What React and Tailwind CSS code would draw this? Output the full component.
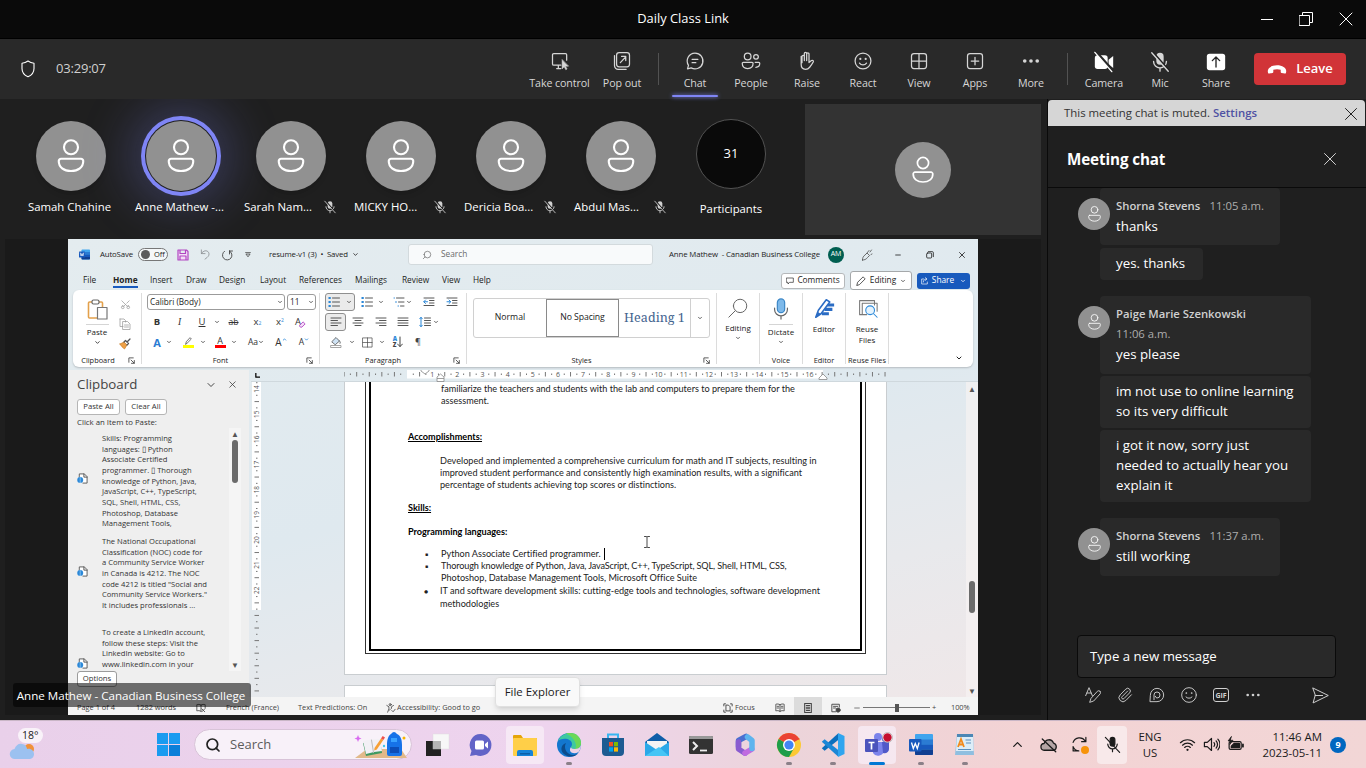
import React from "react";
import { ChevronDown, ChevronUp, X, Search, Paperclip, Minus, Scissors } from "lucide-react";

function Svg({ className = "size-5", box = "0 0 24 24", sw = 1.5, children }) {
  return (
    <svg className={"shrink-0 " + className} viewBox={box} fill="none" stroke="currentColor" strokeWidth={sw} strokeLinecap="round" strokeLinejoin="round">
      {children}
    </svg>
  );
}

const Person = ({ className, sw = 1.7 }) => (
  <Svg className={className} box="0 0 24 30" sw={sw}>
    <circle cx="12" cy="8" r="5.6" />
    <path d="M4 17.2h16a1.8 1.8 0 0 1 1.8 1.8c0 5-4 8-9.8 8s-9.8-3-9.8-8A1.8 1.8 0 0 1 4 17.2Z" />
  </Svg>
);

const MicOff = ({ className }) => (
  <Svg className={className} sw={1.5}>
    <rect x="8" y="2" width="8" height="13" rx="4" fill="currentColor" stroke="none" />
    <path d="M5 11.5a7 7 0 0 0 14 0M12 18.5V22" />
    <path d="M4.5 1.5 22 21.5" className="stroke-[#202020]" strokeWidth="2" />
    <path d="M3 2l18 20" />
  </Svg>
);

/* ---------- Title bar and meeting toolbar ---------- */

function TitleBar() {
  return (
    <header className="grid h-[39px] shrink-0 grid-cols-[1fr_auto_1fr] items-center border-b border-black bg-[#0a0a0a] text-white">
      <span />
      <h1 className="text-[12.9px]">Daily Class Link</h1>
      <div className="flex items-center justify-end gap-[26px] pr-[13px]">
        <span className="h-px w-3 bg-white" />
        <Svg className="size-[14px]" box="0 0 14 14" sw={1}>
          <path d="M.5 3.5h10v10H.5zM3.500 3.500v-3h10v10h-3" strokeLinejoin="miter" />
        </Svg>
        <Svg className="size-[14px]" box="0 0 14 14" sw={1}><path d="M1 1l12 12M13 1L1 13" /></Svg>
      </div>
    </header>
  );
}

const icons = {
  control: <Svg><path d="M13 17H4.500A1.500 1.500 0 0 1 3 15.500v-11A1.500 1.500 0 0 1 4.500 3h14A1.500 1.500 0 0 1 20 4.500V11M8 21h5M10 17v4" /><path d="M14.500 10.500v11l2.500-2.500 2 3.500 1.500-1-2-3.300H22z" fill="currentColor" strokeWidth=".6" /></Svg>,
  popout: <Svg><rect x="5.5" y="2" width="15.5" height="17" rx="3" /><path d="M3 5.500v12a4.500 4.500 0 0 0 4.500 4.500h9.500M10 14l6.500-7M11.500 6.500h5v5" /></Svg>,
  chat: <Svg><path d="M12 2.500a9.500 9.500 0 1 1-4.600 17.800L3 21.500l1.200-4.300A9.500 9.500 0 0 1 12 2.500ZM8.500 10h7M8.500 14H13" /></Svg>,
  people: <Svg><circle cx="8" cy="6.5" r="4" /><circle cx="18" cy="7" r="2.8" /><path d="M2.800 13.500h10.400a1.300 1.300 0 0 1 1.300 1.300c0 4-2.500 6.200-6.500 6.200s-6.500-2.200-6.500-6.200a1.300 1.300 0 0 1 1.300-1.300ZM17 13.500h4.200a1.300 1.300 0 0 1 1.300 1.300c0 3-1.800 4.700-4.700 4.700" /></Svg>,
  raise: <Svg><path d="M7 14V6.500a1.400 1.400 0 0 1 2.800 0V11.500 3a1.400 1.400 0 0 1 2.800 0V11.500 3.500a1.400 1.400 0 0 1 2.800 0v10.300l3-2.300c1.200-.8 2.700.3 2.200 1.500-.9 2-2.600 4.200-4.400 6.500-1.300 1.700-3 2.500-5 2.500-3.500 0-5.200-2.500-5.200-6V6.500" transform="translate(-1)" /></Svg>,
  react: <Svg><circle cx="12" cy="12" r="9.5" /><path d="M7.800 14.500c2 3 6.400 3 8.400 0" /><circle cx="8.800" cy="9.5" r="1.300" fill="currentColor" stroke="none" /><circle cx="15.200" cy="9.5" r="1.300" fill="currentColor" stroke="none" /></Svg>,
  view: <Svg><rect x="3" y="3" width="18" height="18" rx="3" /><path d="M12 3v18M3 12h18" /></Svg>,
  apps: <Svg><rect x="3" y="3" width="18" height="18" rx="3" /><path d="M12 7.500v9M7.500 12h9" /></Svg>,
  more: <Svg><circle cx="4.500" cy="12" r="2.200" fill="currentColor" stroke="none" /><circle cx="12" cy="12" r="2.200" fill="currentColor" stroke="none" /><circle cx="19.500" cy="12" r="2.200" fill="currentColor" stroke="none" /></Svg>,
  camera: <Svg className="size-[22px] text-white"><rect x="2" y="4.500" width="14" height="15" rx="3" fill="currentColor" stroke="none" /><path d="M17 9.500l5-4v13l-5-4z" fill="currentColor" stroke="none" /><path d="M4 1.500l17.500 20" className="stroke-[#292929]" strokeWidth="3" /><path d="M2 1.500l18.500 21" /></Svg>,
  mic: <MicOff className="size-[22px]" />,
  share: <Svg className="size-[22px] text-white"><rect x="2" y="3" width="20" height="18" rx="3" fill="currentColor" stroke="none" /><path d="M12 17.500V7M8 10.500l4-4 4 4" className="stroke-[#292929]" /></Svg>,
};

function Tool({ icon, label, width = "w-14", active }) {
  return (
    <button className={"flex h-full flex-col items-center pt-3 text-[#d6d6d6] " + width}>
      <span className="grid h-5 place-items-center">{icons[icon]}</span>
      <span className="mt-1 h-4 whitespace-nowrap text-[10.700px] leading-4 tracking-[-0.1px]">{label}</span>
      {active && <span className="mt-[4px] h-[2px] w-[46px] rounded bg-[#7f85f5] shadow-[0_0_4px_#7f85f5]" />}
    </button>
  );
}

function Toolbar() {
  return (
    <div className="relative z-10 flex h-[60px] shrink-0 items-center bg-[#292929] pl-[21px] pr-5">
      <Svg className="h-[18px] w-[14px] text-white" box="0 0 14 18" sw={1.1}>
        <path d="M7 1c1.800 1.300 3.700 2 6 2.200V8.500c0 4-2.300 6.700-6 8.300C3.300 15.200 1 12.500 1 8.500V3.200C3.300 3 5.200 2.300 7 1Z" />
      </Svg>
      <span className="ml-[21px] text-[13px] tracking-[-0.2px] text-[#d0d0d0]">03:29:07</span>
      <nav className="ml-auto flex h-full items-center">
        <Tool icon="control" label="Take control" width="w-[69px]" />
        <Tool icon="popout" label="Pop out" />
        <span className="mx-2 h-8 w-px bg-[#525252]" />
        <Tool icon="chat" label="Chat" active />
        <Tool icon="people" label="People" />
        <Tool icon="raise" label="Raise" />
        <Tool icon="react" label="React" />
        <Tool icon="view" label="View" />
        <Tool icon="apps" label="Apps" />
        <Tool icon="more" label="More" />
        <span className="mx-2 h-8 w-px bg-[#525252]" />
        <Tool icon="camera" label="Camera" />
        <Tool icon="mic" label="Mic" />
        <Tool icon="share" label="Share" />
        <button className="ml-[10px] flex h-8 w-[92px] items-center justify-center gap-[9px] rounded-[4px] bg-[#d13438] text-[13px] font-semibold text-white">
          <Svg className="h-[9px] w-5" box="0 0 20 9" sw={0}>
            <path fill="currentColor" d="M10 .3c5.500 0 9.500 2.600 9.200 6.200l-.2 1.200c-.1.700-.7 1-1.300.9l-3-.6c-.6-.1-1-.5-1-1.100V4.800c-2.300-.8-5-.8-7.400 0v2.100c0 .6-.4 1-1 1.100l-3 .6c-.6.100-1.200-.2-1.300-.9L.8 6.500C.5 2.900 4.500.3 10 .3Z" />
          </Svg>
          Leave
        </button>
      </nav>
    </div>
  );
}

/* ---------- Participant strip ---------- */

const people = [
  { name: "Samah Chahine" },
  { name: "Anne Mathew -...", speaking: true },
  { name: "Sarah Nam...", muted: true },
  { name: "MICKY HO...", muted: true },
  { name: "Dericia Boa...", muted: true },
  { name: "Abdul Mas...", muted: true },
];

function Gallery() {
  return (
    <div className="flex h-[140px] shrink-0 pl-[16px] text-white">
      {people.map((p) => (
        <div key={p.name} className="flex w-[110px] flex-col items-center pt-[22px]">
          <div className={"grid size-[70px] place-items-center rounded-full bg-[#919191] " + (p.speaking ? "shadow-[0_0_0_1px_#1f1f1f,0_0_0_5px_#7f85f5,0_0_50px_16px_rgba(127,133,245,0.28)]" : "shadow-md")}>
            <Person className="h-[38px] w-[30px]" />
          </div>
          <div className={"mt-[7px] flex h-[18px] items-center self-stretch whitespace-nowrap text-[11.400px] " + (p.muted ? "justify-between pl-[8px] pr-[9px]" : "-ml-[3px] justify-center")}>
            <span>{p.name}</span>
            {p.muted && <MicOff className="size-[14px] text-[#d0d0d0]" />}
          </div>
        </div>
      ))}
      <div className="flex w-[110px] flex-col items-center pt-[20px]">
        <div className="grid size-[70px] place-items-center rounded-full border border-[#525252] bg-[#0a0a0a] text-[13px]">31</div>
        <span className="mt-[11px] text-[11.300px] leading-[18px]">Participants</span>
      </div>
      <div className="ml-[19px] mt-[5px] grid h-[131px] w-[236px] place-items-center bg-[#333333]">
        <div className="grid size-14 place-items-center rounded-full bg-[#919191]"><Person className="h-[30px] w-[24px]" /></div>
      </div>
    </div>
  );
}

/* ---------- Shared Word window ---------- */

const Chev = ({ className = "size-[7px]" }) => <ChevronDown className={"shrink-0 text-[#333] " + className} strokeWidth={3} />;
const Cell = ({ w, children, className = "" }) => <span className={"flex h-[18px] shrink-0 items-center justify-center " + w + " " + className}>{children}</span>;
const Launcher = ({ className = "" }) => (
  <Svg className={"size-[7px] text-[#333] " + className} box="0 0 8 8" sw={0.9}><path d="M1 6V1h5M3.500 3.500l3.500 3.500M7.200 4v3.200H4" /></Svg>
);

function WordTitle() {
  return (
    <div className="flex h-[31px] shrink-0 items-center pl-[11px] text-[7.800px]">
      <Svg className="size-[11px]" box="0 0 22 22" sw={0}>
        <rect x="5" y="1" width="17" height="20" rx="1.5" fill="#41a5ee" /><path fill="#2b7cd3" d="M5 6h17v5H5z" /><path fill="#185abd" d="M5 11h17v5H5z" /><path fill="#103f91" d="M5 16h17v3.500a1.500 1.500 0 0 1-1.500 1.500h-14A1.500 1.500 0 0 1 5 19.500z" />
        <rect y="5" width="12" height="12" rx="1" fill="#185abd" /><path d="M2.500 8l1.700 6L6 9l1.800 5 1.700-6" stroke="#fff" strokeWidth="1.400" />
      </Svg>
      <span className="ml-[10px] w-[38px] shrink-0 whitespace-nowrap tracking-[-0.15px]">AutoSave</span>
      <span className="flex h-[13px] w-[30px] shrink-0 items-center gap-[4px] rounded-full border border-[#777] bg-[#f5f8f9] pl-[2px] text-[7.500px]"><i className="size-[9px] rounded-full bg-[#5c5c5c]" />Off</span>
      <Svg className="ml-[9px] size-[12px] text-[#b146c2]" sw={2.4}><path d="M2 2h17l3 3v17H2zM6 2v7h11V2M6 22v-8h12v8" fill="#f3dcf7" /></Svg>
      <Svg className="ml-[11px] size-[11px] text-[#8a8f93]" sw={1.8}><path d="M3 2v8h8M3 10C7 3 15 2 18.500 7c3 5 0 9-3 11.500L11 22" /></Svg>
      <Svg className="ml-[10px] size-[12px] text-[#444]" sw={1.8}><path d="M7 4.500A9.500 9.500 0 1 0 17 4M17 4v6M17 4h6" /></Svg>
      <Svg className="ml-[12px] size-[6px] text-[#444]" box="0 0 10 10" sw={1.3}><path d="M1 1h8M2 4l3 4 3-4z" /></Svg>
      <span className="ml-[18px] w-[80px] shrink-0 whitespace-nowrap tracking-[-0.15px]">resume-v1 (3)&nbsp; •&nbsp; Saved</span><Chev className="ml-[3px] size-[7px]" />
      <div className="ml-[49px] flex h-[21px] w-[245px] shrink-0 items-center rounded-[3px] border border-[#d3dadd] bg-[#f8fafb] pl-[13px] text-[8.300px] text-[#6b6b6b]">
        <Search className="size-[10px] -scale-x-100" strokeWidth={1.7} /><span className="ml-[9px]">Search</span>
      </div>
      <span className="ml-[16px] w-[153px] shrink-0 whitespace-nowrap tracking-[-0.12px]">Anne Mathew&nbsp; - Canadian Business College</span>
      <span className="ml-[6px] grid size-[16px] shrink-0 place-items-center rounded-full bg-[#005e50] text-[7px] text-white">AM</span>
      <Svg className="ml-[17px] size-[12px] text-[#444]"><path d="M3 22c0-4 1-7 5-10l4-4 5 5-4 4c-3 4-6 5-10 5ZM12 8l4-5M20 11l2-1M18 6l3-4" /></Svg>
      <Minus className="ml-[21px] size-[8px] shrink-0" strokeWidth={2.5} />
      <Svg className="ml-[24px] size-[8px]" sw={2.5}><rect x="2" y="6" width="15" height="15" rx="3" /><path d="M7 2h12a3 3 0 0 1 3 3v12" /></Svg>
      <X className="ml-[23px] size-[10px] shrink-0" strokeWidth={2} />
    </div>
  );
}

const tabs = [
  ["File", "w-[30px]"], ["Home", "w-[37px]"], ["Insert", "w-[36px]"], ["Draw", "w-[33px]"], ["Design", "w-[41px]"], ["Layout", "w-[39px]"],
  ["References", "w-[56px]"], ["Mailings", "w-[47px]"], ["Review", "w-[40px]"], ["View", "w-[31px]"], ["Help", "w-[30px]"],
];

function WordTabs() {
  return (
    <div className="flex h-[20px] shrink-0 items-center pl-[15px] pr-[8px] pt-px text-[8.300px]">
      {tabs.map(([t, w]) => (
        <span key={t} className={"h-[15px] leading-[13px] " + w}>
          <span className={t === "Home" ? "inline-block border-b-2 border-[#185abd] font-bold" : ""}>{t}</span>
        </span>
      ))}
      <div className="ml-auto flex items-center gap-[5px] whitespace-nowrap">
        <span className="flex h-[16px] w-[64px] items-center justify-center gap-[3px] rounded-[3px] border border-[#b5b8ba] bg-white">
          <Svg className="size-[8px]" sw={2}><path d="M2 3h20v13H11l-5 5v-5H2z" /></Svg>Comments
        </span>
        <span className="flex h-[19px] w-[62px] items-center justify-center gap-[4px] rounded-[3px] border border-[#a5a8aa] bg-white">
          <Svg className="size-[10px]" sw={1.8}><path d="M2 22l2-7L17 2l5 5L9 20z" /></Svg>Editing<Chev className="size-[6px]" />
        </span>
        <span className="flex h-[16px] w-[53px] items-center justify-center gap-[3px] rounded-[3px] bg-[#185abd] text-white">
          <Svg className="size-[8px]" sw={2}><path d="M8 6H2v15h17v-6M7 15c0-6 4-9 9-9M13 2l5 4-5 4" /></Svg>Share<ChevronDown className="ml-[3px] size-[6px]" strokeWidth={3} />
        </span>
      </div>
    </div>
  );
}

const Lines = ({ kind, className = "size-[12px]" }) => {
  const d = {
    left: "M2 4h20M2 9h13M2 14h20M2 19h13",
    center: "M2 4h20M6 9h12M2 14h20M6 19h12",
    right: "M2 4h20M9 9h13M2 14h20M9 19h13",
    full: "M2 4h20M2 9h20M2 14h20M2 19h20",
    list: "M9 4h14M9 12h14M9 20h14",
    multi: "M7 4h15M11 12h11M15 20h7",
    indent: "M2 4h20M13 9h9M13 14h9M2 19h20",
    outdent: "M2 4h20M13 9h9M13 14h9M2 19h20",
    spacing: "M11 4h12M11 9h12M11 14h12M11 19h12",
  }[kind];
  const blue = {
    multi: "M2 4h1M5 12h2M10 20h1",
    indent: "M2 11.500h7M6 8l3.500 3.500L6 15",
    outdent: "M2 11.500h7M5 8l-3.500 3.500L5 15",
    spacing: "M4 3v18M1.500 5.500L4 2.500l2.500 3M1.500 18.500l2.500 3 2.500-3",
  }[kind];
  return (
    <Svg className={className} sw={1.8}>
      <g className="text-[#444]"><path d={d} stroke="currentColor" /></g>
      {kind === "list" && <path d="M3 4h.5M3 12h.5M3 20h.5" stroke="#2b88d8" strokeWidth="4" strokeLinecap="square" />}
      {blue && <path d={blue} stroke="#2b88d8" strokeWidth="2" />}
    </Svg>
  );
};

function Group({ label, width, children, launcher = false }) {
  return (
    <div className={"flex h-[71px] shrink-0 flex-col border-r border-[#dcdcdc] " + width}>
      <div className="flex h-[62px] shrink-0 flex-col">{children}</div>
      <div className="relative h-[9px] whitespace-nowrap text-center text-[7.400px] leading-[10px]">
        <span>{label}</span>
        {launcher && <Launcher className="absolute right-[6px] top-[2px]" />}
      </div>
    </div>
  );
}

function BigButton({ icon, label, chev, line }) {
  return (
    <div className="flex flex-col items-center pt-[5px] text-center text-[8px] leading-[10.500px]">
      {icon}
      {line && <span className="mt-[4px] h-px w-[24px] bg-[#d5d5d5]" />}
      <span className={line ? "mt-[2px]" : "mt-[5px]"}>{label}</span>
      {chev && <Chev className="mt-[1px] size-[6px]" />}
    </div>
  );
}

function Ribbon() {
  return (
    <div className="mx-[5px] flex h-[77px] shrink-0 rounded-[6px] bg-white pt-[3px] shadow-[0_1px_2px_#b5bcc0]">
      <Group label={<span className="mr-[18px]">Clipboard</span>} width="w-[69px]" launcher>
        <div className="flex pl-[12px] pt-[6px]">
          <div className="flex w-[24px] flex-col items-center text-[8px]">
            <Svg className="size-[21px]" box="0 0 21 21" sw={1.2}>
              <rect x="1.5" y="3" width="14" height="16" rx="1" stroke="#e3a14c" strokeWidth="1.600" /><rect x="5" y="1" width="7" height="4" rx="1.5" stroke="#666" fill="#fff" /><rect x="10.5" y="8.5" width="9.5" height="11.5" stroke="#777" fill="#fff" />
            </Svg>
            <span className="mt-[4px] h-px w-[23px] shrink-0 bg-[#d5d5d5]" />
            <span className="mt-[1px] leading-[12px]">Paste</span>
            <Chev className="mt-[1px] size-[7px]" />
          </div>
          <div className="ml-[10px] flex w-[12px] flex-col items-center gap-[8px]">
            <Scissors className="size-[11px] -rotate-90 text-[#999]" strokeWidth={1.6} />
            <Svg className="size-[12px] text-[#999]"><path d="M2 2h8l3 3v3M2 2v15h6M8 7h9l5 5v11H8zM11 14h8M11 18h8" /></Svg>
            <Svg className="size-[12px]" sw={1.3}><path d="M2 12l8-4 6 6-5 8C8 20 4 16 2 12Z" fill="#eda047" stroke="#c97a1e" /><path d="M10 8l3-3 6 6-3 3M16 8l6-6" stroke="#555" strokeWidth="2.500" /></Svg>
          </div>
        </div>
      </Group>

      <Group label={<span className="mr-[20px]">Font</span>} width="w-[178px]" launcher>
        <div className="flex gap-[2px] pl-[5px] pt-px text-[8.200px]">
          <span className="flex h-[16px] w-[138px] items-center justify-between rounded-[3px] border border-[#9b9b9b] pl-[2px] pr-px">Calibri (Body)<Chev className="size-[6px]" /></span>
          <span className="flex h-[16px] w-[29px] items-center justify-between rounded-[3px] border border-[#9b9b9b] pl-[2px] pr-px">11<Chev className="size-[6px]" /></span>
        </div>
        <div className="mt-[3px] flex pl-[4px] text-[9.500px] text-[#333]">
          <Cell w="w-[22px]" className="font-bold">B</Cell>
          <Cell w="w-[23px]" className="font-['Liberation_Serif',serif] italic">I</Cell>
          <Cell w="w-[22px]" className="underline">U</Cell>
          <Cell w="w-[8px]"><Chev className="size-[6px]" /></Cell>
          <Cell w="w-[25px]" className="text-[8.500px] line-through">ab</Cell>
          <Cell w="w-[23px]">x<sub className="text-[5px] text-[#2b88d8]">2</sub></Cell>
          <Cell w="w-[22px]">x<sup className="text-[5px] text-[#2b88d8]">2</sup></Cell>
          <Cell w="w-[19px]">A<Svg className="-ml-[2px] mt-[4px] size-[7px]" sw={3}><path d="M2 15L14 3l7 7L10 21H6z" stroke="#b146c2" fill="#f3dcf7" /></Svg></Cell>
        </div>
        <div className="mt-[2px] flex pl-[7px] text-[10px] leading-none text-[#333]">
          <Cell w="w-[16px]" className="text-[11px] font-bold text-[#2b7cd3]">A</Cell>
          <Cell w="w-[7px]"><Chev className="size-[6px]" /></Cell>
          <Cell w="w-[12px]" className="ml-[10px] flex-col">
            <Svg className="size-[8px]" sw={2}><path d="M5 21l2-7L18 2l4 4L10 18z" /></Svg><i className="h-[3px] w-[11px] bg-[#ffff00]" />
          </Cell>
          <Cell w="w-[7px]" className="ml-[5px]"><Chev className="size-[6px]" /></Cell>
          <Cell w="w-[12px]" className="ml-[8px] flex-col"><span className="text-[9px] leading-[8px]">A</span><i className="h-[3px] w-[11px] bg-[#f00]" /></Cell>
          <Cell w="w-[7px]" className="ml-[4px]"><Chev className="size-[6px]" /></Cell>
          <Cell w="w-[22px]" className="ml-[8px] text-[8.500px]">Aa<Chev className="size-[6px]" /></Cell>
          <Cell w="w-[14px]" className="ml-[7px]">A<ChevronUp className="-mt-[5px] size-[5px] text-[#2b88d8]" strokeWidth={4} /></Cell>
          <Cell w="w-[14px]" className="ml-[9px] text-[8.500px]">A<ChevronDown className="-mt-[5px] size-[5px] text-[#2b88d8]" strokeWidth={4} /></Cell>
        </div>
      </Group>

      <Group label={<span className="mr-[20px]">Paragraph</span>} width="w-[147px]" launcher>
        <div className="flex pl-[5px]">
          <Cell w="w-[30px]" className="gap-[6px] rounded-[3px] border border-[#8f8f8f] bg-[#ebebeb]"><Lines kind="list" /><Chev className="size-[6px]" /></Cell>
          <Cell w="w-[12px]" className="ml-[6px]"><Lines kind="list" /></Cell>
          <Cell w="w-[7px]" className="ml-[4px]"><Chev className="size-[6px]" /></Cell>
          <Cell w="w-[12px]" className="ml-[9px]"><Lines kind="multi" /></Cell>
          <Cell w="w-[7px]"><Chev className="size-[6px]" /></Cell>
          <Cell w="w-[12px]" className="ml-[11px]"><Lines kind="outdent" /></Cell>
          <Cell w="w-[12px]" className="ml-[11px]"><Lines kind="indent" /></Cell>
        </div>
        <div className="mt-[2px] flex pl-[5px]">
          <Cell w="w-[21px]" className="rounded-[3px] border border-[#8f8f8f] bg-[#ebebeb]"><Lines kind="left" /></Cell>
          <Cell w="w-[12px]" className="ml-[6px]"><Lines kind="center" /></Cell>
          <Cell w="w-[12px]" className="ml-[11px]"><Lines kind="right" /></Cell>
          <Cell w="w-[12px]" className="ml-[10px]"><Lines kind="full" /></Cell>
          <Cell w="w-[12px]" className="ml-[10px]"><Lines kind="spacing" /></Cell>
          <Cell w="w-[7px]" className="ml-[1px]"><Chev className="size-[6px]" /></Cell>
        </div>
        <div className="mt-[2px] flex pl-[10px] text-[#444]">
          <Cell w="w-[12px]"><Svg className="size-[12px]" sw={1.5}><path d="M4 11l8-8 7 7-8 7zM19 10c2 2 2 4 1 5" fill="#cfe3f5" /><rect x="2" y="19" width="20" height="4" fill="#fff" stroke="#888" /></Svg></Cell>
          <Cell w="w-[7px]" className="ml-[6px]"><Chev className="size-[6px]" /></Cell>
          <Cell w="w-[12px]" className="ml-[6px]"><Svg className="size-[11px]" sw={1.5}><path d="M2 2h20v20H2zM12 2v20M2 12h20" /></Svg></Cell>
          <Cell w="w-[7px]" className="ml-[5px]"><Chev className="size-[6px]" /></Cell>
          <Cell w="w-[14px]" className="ml-[6px]"><span className="flex flex-col text-[6px] font-bold leading-[6px]"><b className="text-[#2b88d8]">A</b><b>Z</b></span><Svg className="h-[12px] w-[6px]" box="0 0 12 24" sw={2}><path d="M6 2v19M1 16l5 5 5-5" /></Svg></Cell>
          <Cell w="w-[12px]" className="ml-[7px] text-[9px]">¶</Cell>
        </div>
      </Group>

      <Group label={<span className="mr-[20px]">Styles</span>} width="w-[250px]" launcher>
        <div className="ml-[6px] mt-[5px] flex h-[40px] w-[237px] items-center rounded-[3px] border border-[#d0d0d0] text-[8.700px]">
          <span className="w-[72px] text-center">Normal</span>
          <span className="grid h-[38px] w-[73px] place-items-center border-[1.5px] border-[#8a8a8a] tracking-[-0.1px]">No Spacing</span>
          <span className="w-[71px] whitespace-nowrap text-center font-['Noto_Serif','Liberation_Serif',serif] text-[12.600px] text-[#44648f]">Heading 1</span>
          <span className="grid h-full flex-1 place-items-center border-l border-[#d0d0d0]"><Chev className="size-[6px]" /></span>
        </div>
      </Group>

      <Group label="" width="w-[43px]">
        <BigButton label="Editing" chev icon={<Svg className="size-[20px] -scale-x-100 text-[#666]" sw={1.2}><circle cx="9.5" cy="9.5" r="8" /><path d="M15.500 15.500L23 23" /></Svg>} />
      </Group>
      <Group label="Voice" width="w-[43px]">
        <BigButton label="Dictate" chev line icon={<Svg className="size-[22px]" sw={1.3}><rect x="8" y="1" width="8" height="15" rx="4" fill="#7db9ea" stroke="#3c87c7" /><path d="M5 11v1.500a7 7 0 0 0 14 0V11M12 19.500V23" stroke="#666" /></Svg>} />
      </Group>
      <Group label="Editor" width="w-[43px]">
        <BigButton label="Editor" icon={<Svg className="size-[21px]" sw={1.8}><path d="M10 8h13M12 13h9M9 18h8" stroke="#2b6cc4" strokeWidth="3.500" strokeLinecap="butt" /><path d="M2 22l3-8L14 2l4 2.500L8 18z" stroke="#2b6cc4" fill="#fff" /><path d="M2 22l2.500-6 3 2z" fill="#2b6cc4" stroke="none" /></Svg>} />
      </Group>
      <Group label={<span className="-mx-1">Reuse Files</span>} width="w-[43px]">
        <BigButton label={<>Reuse<br />Files</>} icon={<Svg className="size-[21px]" sw={1.2}><path d="M3 19V3h17v5M6 19V6h17v9M3 19h8" stroke="#777" /><circle cx="15" cy="14" r="5" stroke="#2b88d8" fill="#e5f3fd" /><path d="M19 18l4 4" stroke="#2b88d8" /></Svg>} />
      </Group>
      <span className="ml-auto self-end pb-[5px] pr-[10px]"><ChevronDown className="size-[8px]" strokeWidth={3} /></span>
    </div>
  );
}

const clips = [
  { h: "h-[103px]", text: ["Skills: Programming", "languages: ▯ Python", "Associate Certified", "programmer. ▯ Thorough", "knowledge of Python, Java,", "JavaScript, C++, TypeScript,", "SQL, Shell, HTML, CSS,", "Photoshop, Database", "Management Tools,"], icon: "mt-[40px]" },
  { h: "h-[91px]", text: ["The National Occupational", "Classification (NOC) code for", "a Community Service Worker", "in Canada is 4212. The NOC", "code 4212 is titled \"Social and", "Community Service Workers.\"", "It includes professionals ..."], icon: "mt-[30px]" },
  { h: "h-[45px]", text: ["To create a LinkedIn account,", "follow these steps: Visit the", "LinkedIn website: Go to", "www.linkedin.com in your"], icon: "mt-[31px]" },
];

function ClipboardPane() {
  return (
    <aside className="flex w-[181px] shrink-0 flex-col overflow-hidden bg-[#efefef] pl-[9px] text-[#333]">
      <div className="mb-[2px] mt-[2px] flex h-[25px] shrink-0 items-center pr-[11px]">
        <h2 className="text-[13.300px] text-[#444]">Clipboard</h2>
        <ChevronDown className="ml-auto size-[12px]" strokeWidth={1.8} />
        <X className="ml-[10px] size-[11px]" strokeWidth={1.6} />
      </div>
      <div className="flex shrink-0 gap-[5px] text-[7.700px]">
        <span className="grid h-[16px] w-[43px] place-items-center rounded-[3px] border border-[#b5b5b5] bg-white">Paste All</span>
        <span className="grid h-[16px] w-[42px] place-items-center rounded-[3px] border border-[#b5b5b5] bg-white">Clear All</span>
      </div>
      <p className="mt-px shrink-0 text-[7.800px] leading-[12px]">Click an Item to Paste:</p>
      <div className="flex h-[243px] shrink-0">
        <div className="h-[242px] flex-1 overflow-hidden pt-[5px]">
          {clips.map((c, i) => (
            <div key={i} className={"flex " + c.h}>
              <Svg className={"size-[11px] " + c.icon} sw={2}><path d="M5 9V2h11l6 6v14h-9M15 2v7h7" fill="#fff" stroke="#555" /><circle cx="7" cy="15" r="6.5" fill="#2b88d8" stroke="none" /><path d="M7 9v12" stroke="#9fd0f5" strokeWidth="1.500" /></Svg>
              <p className="ml-[14px] whitespace-nowrap text-[7.600px] leading-[10.660px]">{c.text.map((l) => <span key={l} className="block">{l}</span>)}</p>
            </div>
          ))}
        </div>
        <div className="mr-[8px] flex w-[12px] flex-col items-center bg-[#f5f5f5] py-[2px]">
          <span className="text-[8px] leading-[8px] text-[#555]">▲</span>
          <span className="mt-[2px] h-[43px] w-[6px] rounded-full bg-[#6b6b6b]" />
          <span className="mt-auto text-[8px] leading-[8px] text-[#555]">▼</span>
        </div>
      </div>
      <span className="grid h-[16px] w-[40px] shrink-0 place-items-center rounded-[3px] border border-[#9b9b9b] bg-white text-[7.700px]">Options</span>
    </aside>
  );
}

function HRuler() {
  const ticks = [];
  for (let i = -10; i <= 76; i++) ticks.push(i);
  return (
    <svg className="h-[12px] w-[543px]" viewBox="0 0 543 12">
      <path d="M63 0h416v8.500H63z" fill="#fff" />
      {ticks.map((i) => {
        const x = 63 + i * 6.29;
        if (i % 4 === 0 && i > 0 && i <= 64) return <text key={i} x={x} y="7" fontSize="7" textAnchor="middle" fill="#555">{i / 4}</text>;
        return i === 0 ? null : <path key={i} d={i % 2 ? `M${x} 3.500v1.500` : `M${x} 2v4.500`} stroke="#777" strokeWidth="1" />;
      })}
      <path d="M77 -1h8v2l-4 3-4-3zM93 11.500h7V7l-3.500-3L93 7zM93 8.500h7M475 8l4-4 4 4v1.500h-8z" fill="#fff" stroke="#888" strokeWidth=".8" />
    </svg>
  );
}

function VRuler() {
  const ticks = [];
  for (let i = -1; i <= 48; i++) ticks.push(i);
  return (
    <svg className="h-[315px] w-[12px]" viewBox="0 0 12 315">
      <path d="M1 0h9v228H1z" fill="#fff" />
      {ticks.map((i) => {
        const y = 7 + i * 6.29;
        if (i % 4 === 0 && i <= 32) return <text key={i} x="0" y="0" transform={`translate(8 ${y}) rotate(-90)`} fontSize="6.5" textAnchor="middle" fill="#555">{14 + i / 4}</text>;
        return <path key={i} d={i % 2 ? `M5 ${y}h1.500` : `M3.500 ${y}h4.500`} stroke="#777" />;
      })}
    </svg>
  );
}

function Document() {
  return (
    <article className="h-[293px] w-[543px] shrink-0 border-x border-b border-[#c9cdd0] bg-white px-[20px] text-[#222]">
      <div className="h-[272px] border-x border-b border-[#333] px-[3px] pb-[2px]">
        <div className="h-[269px] border-x-2 border-b-2 border-black pl-[37px] pt-px font-['Lato',sans-serif] text-[9.150px] leading-[12px] [font-variant-ligatures:none]">
          <p className="whitespace-nowrap pl-[33px]">familiarize the teachers and students with the lab and computers to prepare them for the<br />assessment.</p>
          <h3 className="mt-[24px] font-bold text-black"><u className="underline-offset-1">Accomplishments:</u></h3>
          <p className="mt-[12px] whitespace-nowrap pl-[32px]">Developed and implemented a comprehensive curriculum for math and IT subjects, resulting in<br />improved student performance and consistently high examination results, with a significant<br />percentage of students achieving top scores or distinctions.</p>
          <h3 className="mt-[11px] font-bold text-black"><u className="underline-offset-1">Skills:</u></h3>
          <h3 className="mt-[12px] font-bold text-black">Programming languages:</h3>
          <ul className="mt-[10px] whitespace-nowrap">
            <li className="flex"><span className="w-[33px] pl-[17px] text-[5px]">■</span><span className="flex">Python Associate Certified programmer. <i className="ml-[3px] h-[12px] w-px bg-black" /></span></li>
            <li className="flex"><span className="w-[33px] pl-[17px] text-[5px]">■</span><span><span className="tracking-[-0.13px]">Thorough knowledge of Python, Java, JavaScript, C++, TypeScript, SQL, Shell, HTML, CSS,</span><br />Photoshop, Database Management Tools, Microsoft Office Suite</span></li>
            <li className="mt-px flex leading-[12.600px]"><span className="w-[32px] pl-[16px] text-[7px]">●</span><span>IT and software development skills: cutting-edge tools and technologies, software development<br />methodologies</span></li>
          </ul>
        </div>
      </div>
    </article>
  );
}

function StatusBar() {
  return (
    <footer className="flex h-[18px] shrink-0 items-center whitespace-nowrap bg-[#f4f4f4] pl-[9px] pr-[9px] text-[7.400px] text-[#444] *:pt-[3px]">
      <span className="w-[59px]">Page 1 of 4</span>
      <span className="w-[60px]">1282 words</span>
      <Svg className="h-[13px] w-[10px]" sw={2}><path d="M12 5v15M12 5C9 3 5 3 2 4v15c3-1 7-1 10 1M12 5c3-2 7-2 10-1v8M14 14l7 7M21 14l-7 7" /></Svg>
      <span className="ml-[20px] w-[72px]">French (France)</span>
      <span className="w-[88px]">Text Predictions: On</span>
      <Svg className="h-[13px] w-[10px]" sw={2}><circle cx="10" cy="4" r="2.5" /><path d="M2 6l5 3v5l-3 8M18 6l-5 3v4M9 17l1-2M14 18l3 3 5-6" /></Svg>
      <span className="ml-px">Accessibility: Good to go</span>
      <Svg className="ml-auto h-[13px] w-[10px]" sw={2.2}><path d="M2 7V2h4M2 17v5h4M22 7V2h-4M22 17v5h-4M8 5h5l4 4v10H8z" /></Svg>
      <span className="ml-[2px] w-[40px]">Focus</span>
      <Svg className="mr-[9px] h-[13px] w-[10px]" sw={2}><path d="M12 4v16M12 4C9 2 5 2 2 3v16c3-1 7-1 10 1M12 4c3-2 7-2 10-1v16c-3-1-7-1-10 1M5 8h4M5 12h4M15 8h4M15 12h4" /></Svg>
      <span className="grid h-full w-[28px] place-items-center bg-[#dcdcdc]"><Svg className="size-[10px]" sw={2.5}><path d="M4 1h16v22H4zM8 6h8M8 10h8M8 14h8M8 18h8" /></Svg></span>
      <Svg className="ml-[9px] h-[13px] w-[10px]" sw={2.2}><path d="M11 21H2V3h18v7M6 8h10M6 12h5" /><circle cx="17" cy="17" r="5" fill="#444" /></Svg>
      <Minus className="ml-[12px] h-[11px] w-[8px]" />
      <span className="ml-[2px] flex h-[11px] w-[67px] items-center"><i className="h-px w-[32px] bg-[#777]" /><i className="h-[8px] w-[4px] bg-[#555]" /><i className="h-px flex-1 bg-[#777]" /></span>
      <span className="ml-[2px] w-[19px]">+</span>
      <span className="w-[18px] tracking-[-0.1px]">100%</span>
    </footer>
  );
}

function WordWindow() {
  return (
    <section className="relative flex h-[476px] w-[910px] flex-col overflow-hidden bg-[linear-gradient(165deg,#e4ecef_0%,#dfe9ef_50%,#e8e9ec_75%,#f0e7e8_100%)] text-[#222]">
      <WordTitle />
      <WordTabs />
      <Ribbon />
      <div className="flex min-h-0 flex-1 pt-[3px]">
        <ClipboardPane />
        <div className="flex min-w-0 flex-1 flex-col pl-[2px]">
          <div className="flex h-[12px] shrink-0 items-center border-b border-[#cfd8dd]">
            <Svg className="ml-[4px] size-[5px] text-black" box="0 0 6 6" sw={1.5}><path d="M1 0v5h5" /></Svg>
            <span className="ml-[84px] flex"><HRuler /></span>
          </div>
          <div className="flex min-h-0 flex-1">
            <div className="w-[12px] shrink-0 overflow-hidden"><VRuler /></div>
            <div className="ml-[81px] flex flex-col overflow-hidden">
              <Document />
              <div className="mt-[10px] h-[20px] w-[543px] shrink-0 border border-[#c9cdd0] bg-white" />
            </div>
            <div className="ml-auto flex w-[12px] flex-col items-center bg-[#f6f2f2]/70 pb-[2px] pt-[3px] text-[8px] leading-[8px] text-[#555]">
              ▲<span className="mt-[188px] h-[32px] w-[6px] rounded-full bg-[#6b6b6b]" /><span className="mt-auto">▼</span>
            </div>
          </div>
        </div>
      </div>
      <StatusBar />
      <Svg className="absolute left-[576px] top-[297px] h-[12px] w-[6px] text-[#333]" box="0 0 6 12" sw={0.9}><path d="M.5.500h1.800l.7.600.7-.600h1.800M.5 11.500h1.800l.7-.600.7.600h1.800M3 1v10" /></Svg>
    </section>
  );
}

/* ---------- Chat panel ---------- */

function Bubble({ name, time, stacked, width, height, lines, avatar }) {
  return (
    <div className={"relative ml-[33px] rounded-[4px] bg-[#292929] px-4 text-[13.300px] leading-5 text-white " + width + " " + height}>
      {avatar && (
        <span className="absolute -left-[22px] top-[10px] grid size-8 place-items-center rounded-full bg-[#919191]">
          <Person className="h-[18px] w-[15px]" sw={1.4} />
        </span>
      )}
      {name && (
        <div className={"flex flex-wrap text-[11.300px] text-[#d0d0d0] " + (stacked ? "flex-col" : "justify-between")}>
          <b className="font-semibold">{name}</b>
          <span className="text-[#adadad]">{time}</span>
        </div>
      )}
      {lines.map((l) => <p key={l} className="whitespace-nowrap">{l}</p>)}
    </div>
  );
}

function ChatPanel() {
  return (
    <aside className="flex w-[319px] shrink-0 flex-col border-l border-[#0a0a0a] bg-[#1f1f1f] text-white">
      <div className="mr-px mt-px flex h-[26px] shrink-0 items-center rounded-t-[4px] bg-[#d6d6d6] pl-[16px] pr-[8px] text-[11.400px] text-[#333]">
        This meeting chat is muted.<b className="ml-[3px] font-semibold text-[#4f52a3]">Settings</b>
        <Svg className="ml-auto mt-[2px] size-[12px] text-[#222]" box="0 0 12 12" sw={1}><path d="M.5.5l11 11M11.500.5l-11 11" /></Svg>
      </div>
      <div className="flex h-[62px] shrink-0 items-center border-b border-[#0a0a0a] pl-[19px] pr-[30px] pt-[5px]">
        <h2 className="text-[15.200px] font-bold tracking-[-0.1px]">Meeting chat</h2>
        <Svg className="ml-auto size-[12px] text-[#d0d0d0]" box="0 0 12 12" sw={1}><path d="M.5.5l11 11M11.500.5l-11 11" /></Svg>
      </div>
      <div className="flex flex-1 flex-col gap-[2px] overflow-hidden pl-[19px]">
        <Bubble avatar name="Shorna Stevens" time="11:05 a.m." width="w-[180px]" height="h-[57px] pt-[8px]" lines={["thanks"]} />
        <Bubble width="w-[103px]" height="mt-px h-[32px] pt-[5px]" lines={["yes. thanks"]} />
        <Bubble avatar stacked name="Paige Marie Szenkowski" time="11:06 a.m." width="w-[211px]" height="mt-[14px] h-[78px] pt-[8px]" lines={["yes please"]} />
        <Bubble width="w-[211px]" height="h-[52px] pt-[5px]" lines={["im not use to online learning", "so its very difficult"]} />
        <Bubble width="w-[211px]" height="h-[72px] pt-[5px]" lines={["i got it now, sorry just", "needed to actually hear you", "explain it"]} />
        <Bubble avatar name="Shorna Stevens" time="11:37 a.m." width="w-[180px]" height="mt-[14px] h-[58px] pt-[8px]" lines={["still working"]} />
      </div>
      <div className="ml-[29px] flex h-[43px] w-[259px] shrink-0 items-center rounded-[4px] border border-[#0a0a0a] bg-[#292929] pl-[12px] text-[13.200px]">Type a new message</div>
      <div className="flex h-[42px] shrink-0 items-start gap-[16px] pl-[37px] pr-[37px] pt-[9px] text-[#d0d0d0]">
        <Svg className="size-4" sw={1.4}><path d="M1 13L6 1l5 12M3 9h6M22.500 6.500c-1.500-1.500-3-1-4 0L9 17l-2 6 6-2L22.500 10.500c1-1 1-3 0-4Z" /></Svg>
        <Paperclip className="size-4" strokeWidth={1.4} />
        <Svg className="size-4" sw={1.4}><path d="M2 12a10 10 0 1 1 10 10H2zM7.500 19v-7a4.500 4.500 0 1 1 4.500 4.500 3 3 0 0 1-2.500-2.500" /></Svg>
        <Svg className="size-4" sw={1.4}><circle cx="12" cy="12" r="11" /><path d="M7.500 15c2 2.500 7 2.500 9 0" /><circle cx="8" cy="9" r="1.300" fill="currentColor" stroke="none" /><circle cx="16" cy="9" r="1.300" fill="currentColor" stroke="none" /></Svg>
        <span className="mt-px grid h-[14px] w-4 place-items-center rounded-[3px] border border-[#d0d0d0] text-[7px] font-bold leading-none">GIF</span>
        <Svg className="size-4"><circle cx="4" cy="12" r="2" fill="currentColor" stroke="none" /><circle cx="12" cy="12" r="2" fill="currentColor" stroke="none" /><circle cx="20" cy="12" r="2" fill="currentColor" stroke="none" /></Svg>
        <Svg className="ml-auto size-[17px]" sw={1.4}><path d="M1.500 1.500L23 12 1.500 22.500 4.500 12zM4.500 12H15" /></Svg>
      </div>
    </aside>
  );
}

/* ---------- Windows taskbar ---------- */

const apps = [
  { id: "taskview", art: <><rect x="1" y="8" width="15" height="15" fill="#222" /><rect x="8" y="1" width="16" height="15" fill="#f7f7f7" stroke="#ddd" strokeWidth=".4" /><rect x="1" y="7" width="13" height="9" fill="#777" opacity="0" /><rect x="8" y="8" width="8" height="8" fill="#b5b5b5" /></> },
  { id: "chat", art: <><path d="M12.500 1A11 11 0 1 1 7 22l-6 1 1.500-5A11 11 0 0 1 12.500 1Z" fill="#6264c7" /><rect x="6" y="7.5" width="9" height="9" rx="1.5" fill="#fff" /><path d="M16 11l3-2.500v7L16 13z" fill="#fff" /></> },
  { id: "explorer", on: "w-[38px]", art: <><path d="M0 3a1 1 0 0 1 1-1h7l2 3h13a1 1 0 0 1 1 1v4H0z" fill="#e5a50a" /><rect y="5" width="24" height="18" rx="1" fill="#ffcf48" /><path d="M4 23v-4a2 2 0 0 1 2-2h12a2 2 0 0 1 2 2v4z" fill="#1683d8" /><path d="M7 20h10v1.500H7z" fill="#0b5ea8" /></> },
  { id: "edge", run: true, art: <><circle cx="12" cy="12" r="12" fill="#1377cf" /><path d="M1 8C4 1 10 0 13 0c7 0 11 5 11 10 0 4-3 6-6 6s-4-1-4-2c0-1 1-1 1-3C15 6 6 4 1 8Z" fill="#3ec9a0" /><path d="M13 0c7 0 11 5 11 10 0 4-3 6-6 6 3-4-1-12-9-15.500C10 0 12 0 13 0Z" fill="#6bd858" /><path d="M9 10c-3 5 1 12 7 12 2 0 4-1 5.500-2-3 4-9 4.500-13 2C3 19 3 12 9 10Z" fill="#0c4c8c" /><path d="M14 14c0 1 1 2 4 2 2 0 5-1 6-4 0 3-1 5-2.500 7-5 3-11 0-7.500-5Z" fill="#edd3e6" /></> },
  { id: "store", art: <><path d="M7 5V1.500h10V5" stroke="#38b6f1" strokeWidth="2" fill="none" /><path d="M1 5h22v14a4 4 0 0 1-4 4H5a4 4 0 0 1-4-4z" fill="#1d5b92" /><path d="M8 9h4v4.300H8z" fill="#f25022" /><path d="M13 9h4v4.300h-4z" fill="#7fba00" /><path d="M8 14.300h4v4.300H8z" fill="#00a4ef" /><path d="M13 14.300h4v4.300h-4z" fill="#ffb900" /></> },
  { id: "mail", art: <><path d="M0 9L12 0l12 9v14H0z" fill="#0f5ea8" /><path d="M2 8h20v8H2z" fill="#f4f4f4" /><path d="M0 9l12 8L24 9v14H0z" fill="#2aa8e8" /><path d="M0 23l14-9L24 23z" fill="#45c5f5" /></> },
  { id: "terminal", art: <><rect y="3" width="24" height="18" rx="1.5" fill="#333" /><path d="M0 4.500A1.500 1.500 0 0 1 1.500 3h21A1.500 1.500 0 0 1 24 4.500V6H0z" fill="#999" /><path d="M4 9l4 4-4 4" stroke="#eee" strokeWidth="2" fill="none" /><path d="M11 17.500h7" stroke="#eee" strokeWidth="1.800" /></> },
  { id: "m365", art: <g fill="none" strokeLinejoin="round" strokeWidth="5.500"><path d="M13 3.500L5.500 7.500v6" stroke="#4a6fd0" strokeLinecap="round" /><path d="M5.500 9v7l6.500 4.200" stroke="#8a5bd0" strokeLinecap="round" /><path d="M12 20.200l6.800-4" stroke="#c06be0" strokeLinecap="round" /><path d="M14.500 4l4.500 3.500v8" stroke="#5db4ee" strokeLinecap="round" /></g> },
  { id: "chrome", run: true, art: <><circle cx="12" cy="12" r="12" fill="#fcc934" /><path d="M12 12L1.600 6A12 12 0 0 1 22.400 6Z" fill="#ea4335" /><path d="M12 6h10.400" stroke="#ea4335" strokeWidth="1" /><path d="M1.600 6A12 12 0 0 0 12 24l5-9-5-3z" fill="#1e9e4a" /><circle cx="12" cy="12" r="6" fill="#fff" /><circle cx="12" cy="12" r="4.600" fill="#4285f4" /></> },
  { id: "vscode", run: true, art: <><path d="M17 .5L.8 15.200l2.800 2.500L18.500 6z" fill="#0b6fbd" /><path d="M17 23.500L.8 8.800l2.800-2.500L18.500 18z" fill="#1b87d6" /><path d="M17 0l6.500 3v18L17 24z" fill="#2fa5ef" /></> },
  { id: "teams", on: "w-[38px]", art: <><circle cx="13" cy="4" r="4" fill="#7b83eb" /><circle cx="20" cy="6" r="3" fill="#5059c9" /><path d="M8 9h11v8a6 6 0 0 1-11 3z" fill="#7b83eb" /><path d="M17 9h7v7c0 3-3 5-6 4z" fill="#5059c9" /><rect y="6" width="13" height="13" rx="1" fill="#4b53bc" /><path d="M3.500 9.500h6M6.500 9.500v7" stroke="#fff" strokeWidth="1.700" /><circle cx="22.500" cy="4.500" r="5" fill="#fff" stroke="#999" strokeWidth=".6" /><circle cx="22.500" cy="4.500" r="4.200" fill="#c50f2f" /></> },
  { id: "word", run: true, art: <><rect x="6" y="1" width="18" height="21" rx="1" fill="#41a5ee" /><path d="M6 6.500h18v5H6z" fill="#2b7cd3" /><path d="M6 11.500h18v5H6z" fill="#185abd" /><path d="M6 16.500h18V21a1 1 0 0 1-1 1H7a1 1 0 0 1-1-1z" fill="#103f91" /><rect y="6" width="12.500" height="12.500" rx="1" fill="#185abd" /><path d="M2.500 9.500l1.800 6 2-5 2 5 1.800-6" stroke="#fff" strokeWidth="1.300" fill="none" /></> },
  { id: "wordpad", run: true, art: <><path d="M4 1h16l1 21H2z" fill="#8fbfe0" /><path d="M4 1h16v3H4z" fill="#4b87b5" /><path d="M4 4h16l.6 14H3z" fill="#dcedf8" /><path d="M5 14l3-8 3 8M6 11.500h4" stroke="#f28a1c" strokeWidth="1.800" fill="none" /><path d="M12.500 7H18M13 10h5M5 16.500h13" stroke="#5a8fbc" strokeWidth="1" /></> },
];

function Taskbar() {
  return (
    <footer className="flex h-12 shrink-0 items-center border-t border-[#c9b6c6] bg-[linear-gradient(90deg,#e9d0ea_0%,#eed4ee_40%,#ecd4da_58%,#f3d3d4_75%,#f2d6d6_100%)] text-[#1b1b1b]">
      <div className="flex w-[149px] pl-[9px]">
        <div className="relative h-[36px] w-[34px]">
          <Svg className="absolute bottom-[3px] left-0 h-[18px] w-[26px]" box="0 0 26 18" sw={0}><circle cx="20" cy="7" r="5" fill="#f0913a" /><path d="M6 17a5 5 0 0 1-.500-10C7 3 10 1 13 2c3 0 5 3 5 5 4-1 7 2 7 5s-2 5-5 5z" fill="#9cc1f0" /></Svg>
          <span className="absolute left-[9px] top-[1px] rounded-full bg-[#f9f2f9] px-[4px] text-[10.500px] leading-[15px]">18°</span>
        </div>
      </div>
      <div className="grid w-[39px] place-items-center">
        <Svg className="size-[23px]" box="0 0 23 23" sw={0}><path fill="#1a9bf0" d="M0 0h11v11H0zM12 0h11v11H12zM0 12h11v11H0z" /><path fill="#0a7fd9" d="M12 12h11v11H12z" /></Svg>
      </div>
      <div className="ml-[6px] flex h-[31px] w-[218px] items-center rounded-full border border-[#d8c3d8] bg-[#f8f1f9] pl-[10px] text-[13px] text-[#5c5c5c]">
        <Search className="size-[16px] text-[#222]" strokeWidth={2.6} />
        <span className="ml-[9px]">Search</span>
        <Svg className="ml-auto mr-[2px] h-[28px] w-[56px]" box="0 0 56 28" sw={0}>
          <path d="M2 27l12-9h34l6 9z" fill="#e2b98a" /><path d="M5 4l1 2.500 2.500 1L6 8.500 5 11 4 8.500 1.500 7.500 4 6.500z" fill="#d96cf0" />
          <path d="M10 12l17-3 2 13-16 3z" fill="#3f9a62" /><path d="M10 10l8-1.500 9-.5 2 12-8 1-8 2z" fill="#f2f0f5" /><path d="M18.500 9l2 12.500" stroke="#bbb" strokeWidth="1" />
          <path d="M21.500 17l6.500-9.500 2.300 1.600-6.500 9.500-2.600 1z" fill="#f7a035" /><path d="M28 7.500l1.700-2.500 2.300 1.600-1.700 2.500z" fill="#f0504a" />
          <path d="M38 3q3-4 6 0c4 2 5 6 5 11v9q0 2-2 2H36q-2 0-2-2v-9c0-5 1-9 4-11Z" fill="#1672e8" /><path d="M37 16h9v6h-9z" fill="#0c4db8" /><path d="M38 7h6v4h-6z" fill="#38a1ff" /><circle cx="51" cy="7" r="1.500" fill="#f7b500" /><circle cx="31" cy="15" r="1.200" fill="#44c7e8" />
        </Svg>
      </div>
      <nav className="ml-[3px] flex">
        {apps.map((a) => (
          <span key={a.id} className="relative flex h-[46px] w-[44px] items-center justify-center">
            <span className={"grid place-items-center rounded-[4px] " + (a.on ? "h-[38px] bg-[#f8ecf6]/80 " + a.on : "")}>
              <svg className="size-6 overflow-visible" viewBox="0 0 24 24">{a.art}</svg>
            </span>
            {a.run && <i className="absolute bottom-[3px] h-[3px] w-[6px] rounded-full bg-[#8b8088]" />}
            {a.id === "teams" && <i className="absolute bottom-[3px] h-[3px] w-[16px] rounded-full bg-[#0078d4]" />}
          </span>
        ))}
      </nav>
      <div className="ml-auto flex items-center pr-[20px]">
        <ChevronUp className="size-[15px]" strokeWidth={2} />
        <Svg className="ml-[15px] size-[18px]" sw={1.7}><path d="M6 19a4.500 4.500 0 0 1-.500-9A6.500 6.500 0 0 1 18 9.500a5 5 0 0 1 .5 9.500z" fill="#b5a5a5" /><path d="M3 4l18 17" /></Svg>
        <span className="relative ml-[13px] size-[18px]"><Svg className="size-[17px]" sw={1.7}><path d="M3 9A9.500 9.500 0 0 1 20 7M21 2v6h-6M3 15v6h6M3 15a9 9 0 0 0 8 6" /></Svg><i className="absolute bottom-0 right-0 size-[8px] rounded-full bg-[#f7930a]" /></span>
        <span className="ml-[8px] grid h-[38px] w-[30px] place-items-center rounded-[4px] bg-[#f8e9ea]">
          <Svg className="size-[19px]" sw={1.5}><rect x="9" y="3" width="6" height="11" rx="3" fill="currentColor" /><path d="M6 11.500a6 6 0 0 0 12 0M12 18v3M3 3l18 19" /></Svg>
        </span>
        <span className="ml-[8px] w-[30px] text-center text-[11.400px] leading-[16px]">ENG<br />US</span>
        <Svg className="ml-[14px] size-[17px]" sw={1.7}><path d="M2 9.500a14 14 0 0 1 20 0M5 13a10 10 0 0 1 14 0M8 16.200a5.500 5.500 0 0 1 8 0" /><circle cx="12" cy="19.500" r="1.600" fill="currentColor" stroke="none" /></Svg>
        <Svg className="ml-[7px] size-[17px]" sw={1.7}><path d="M2 9h4l6-5.500v17L6 15H2zM15.500 9.500a4 4 0 0 1 0 5M18.500 7a8 8 0 0 1 0 10M21 4.500a11 11 0 0 1 0 15" /></Svg>
        <Svg className="ml-[7px] size-[17px]" sw={1.7}><rect x="3" y="8" width="17" height="11" rx="2" /><path d="M10 10.500h7.500v6H6v-2z" fill="currentColor" /><path d="M22.500 12v3" strokeWidth="2.500" /><path d="M6 1L1.500 7H5l-1 5 4.500-6H5z" fill="currentColor" strokeWidth="1" /></Svg>
        <span className="ml-[8px] w-[70px] whitespace-nowrap text-right text-[11.400px] leading-[16px]">11:46 AM<br />2023-05-11</span>
        <span className="ml-[8px] grid size-[16px] place-items-center rounded-full bg-[#0067c0] text-[9px] font-bold text-white">9</span>
      </div>
    </footer>
  );
}

export default function App() {
  return (
    <div className="relative flex h-[768px] w-[1366px] flex-col overflow-hidden bg-[#1f1f1f] font-['Open_Sans','Noto_Sans',sans-serif]">
      <TitleBar />
      <Toolbar />
      <main className="flex min-h-0 flex-1">
        <div className="flex w-[1047px] shrink-0 flex-col">
          <Gallery />
          <div className="ml-[5px] flex h-[476px] w-[1036px] bg-[#1a1a1a] pl-[63px]"><WordWindow /></div>
        </div>
        <ChatPanel />
      </main>
      <Taskbar />
      <div className="absolute left-[13px] top-[683px] grid h-[24px] w-[238px] place-items-center whitespace-nowrap rounded-[3px] bg-black/55 pr-[2px] pt-px text-[11.600px] text-white">Anne Mathew - Canadian Business College</div>
      <div className="absolute left-[495px] top-[677px] grid h-[30px] w-[85px] place-items-center whitespace-nowrap rounded-[4px] border border-[#e0e0e0] bg-[#f9f9f9] text-[11.400px] text-[#1b1b1b] shadow-md">File Explorer</div>
    </div>
  );
}
